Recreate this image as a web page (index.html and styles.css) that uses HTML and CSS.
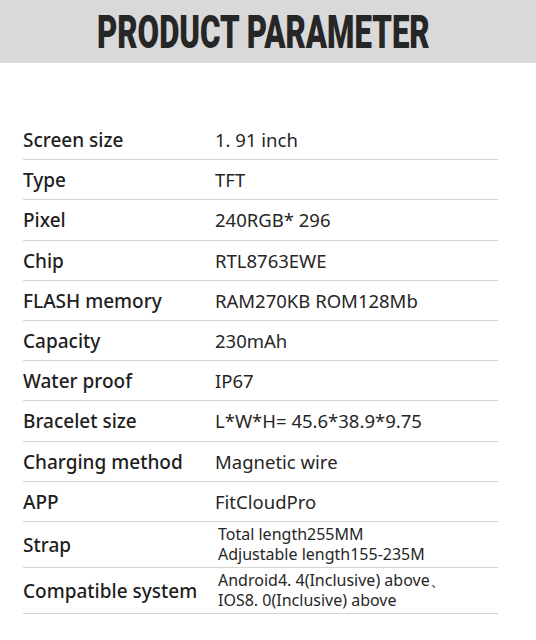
FILE: index.html
```html
<!DOCTYPE html>
<html>
<head>
<meta charset="utf-8">
<link rel="stylesheet" href="styles.css">
</head>
<body>
<div class="header"><h1 class="title">PRODUCT PARAMETER</h1></div>
<div class="table">
  <div class="row"><div class="label">Screen size</div><div class="value">1. 91 inch</div></div>
  <div class="row"><div class="label">Type</div><div class="value">TFT</div></div>
  <div class="row"><div class="label">Pixel</div><div class="value">240RGB* 296</div></div>
  <div class="row"><div class="label">Chip</div><div class="value">RTL8763EWE</div></div>
  <div class="row"><div class="label">FLASH memory</div><div class="value">RAM270KB ROM128Mb</div></div>
  <div class="row"><div class="label">Capacity</div><div class="value">230mAh</div></div>
  <div class="row"><div class="label">Water proof</div><div class="value">IP67</div></div>
  <div class="row"><div class="label">Bracelet size</div><div class="value">L*W*H= 45.6*38.9*9.75</div></div>
  <div class="row"><div class="label">Charging method</div><div class="value">Magnetic wire</div></div>
  <div class="row"><div class="label">APP</div><div class="value">FitCloudPro</div></div>
  <div class="row tall"><div class="label">Strap</div><div class="value small">Total length255MM<br>Adjustable length155-235M</div></div>
  <div class="row tall"><div class="label">Compatible system</div><div class="value small">Android4. 4(Inclusive) above、<br>IOS8. 0(Inclusive) above</div></div>
</div>
</body>
</html>
```
FILE: styles.css
```css
html, body {
  margin: 0;
  padding: 0;
  background: #fff;
}
body {
  width: 536px;
  height: 640px;
  overflow: hidden;
  font-family: "Noto Sans", "Open Sans", sans-serif;
  color: #222;
}
.header {
  background: #d9d9d9;
  height: 63px;
  display: flex;
  justify-content: center;
  align-items: flex-start;
}
.title {
  margin: 10px 0 0;
  font-family: Roboto, "DejaVu Sans", sans-serif;
  font-weight: 900;
  font-size: 40px;
  line-height: 40px;
  color: #262626;
  white-space: nowrap;
  transform: translateX(-5px) scale(0.78, 1.16);
  transform-origin: center top;
}
.table {
  margin: 57px 38px 0 23px;
  display: flex;
  flex-direction: column;
}
.row {
  box-sizing: border-box;
  display: flex;
  align-items: center;
  height: 40.2px;
  border-bottom: 1.5px solid #d3d3d3;
}
.row.tall {
  height: 46px;
}
.label {
  width: 192px;
  font-size: 19px;
  font-weight: 500;
  line-height: 24px;
  color: #1e1e1e;
  padding-top: 1px;
}
.value {
  font-size: 18.5px;
  line-height: 24px;
  color: #262626;
  padding-top: 1px;
}
.value.small {
  font-size: 16px;
  line-height: 20px;
  padding-top: 0;
  padding-left: 3px;
}
```
